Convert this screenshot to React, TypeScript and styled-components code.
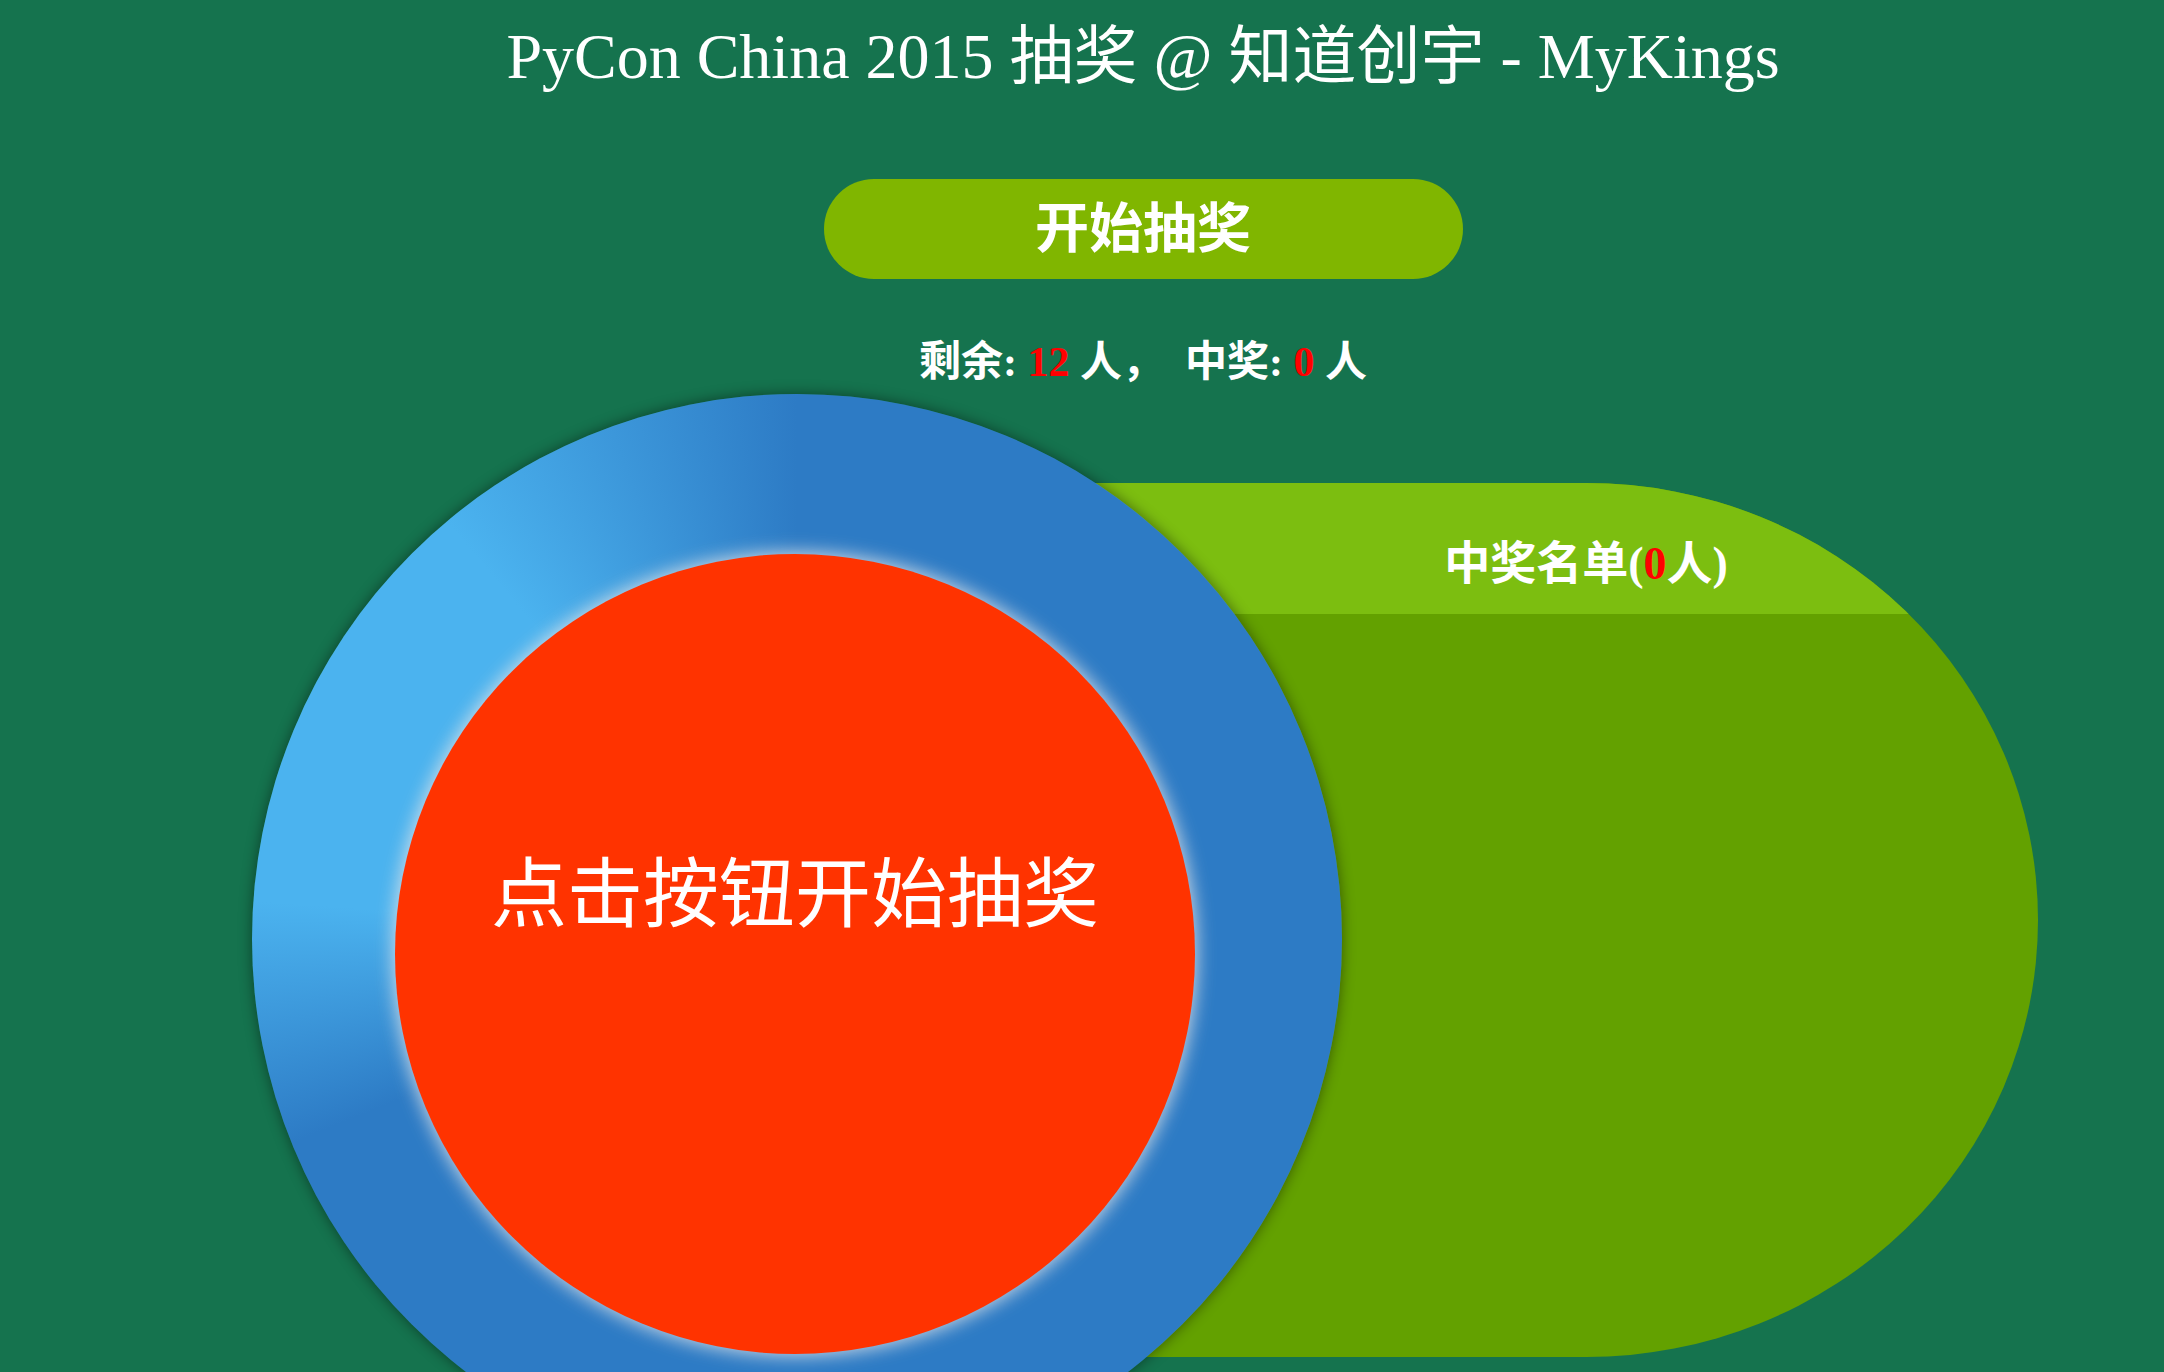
import React from 'react'
import styled, { createGlobalStyle } from 'styled-components'

const GlobalStyle = createGlobalStyle`
  html, body {
    margin: 0;
    padding: 0;
    background: #15734e;
    overflow: hidden;
  }

  body {
    font-family: 'Liberation Serif', 'Noto Sans CJK SC', serif;
    color: #fff;
  }
`

const Page = styled.main`
  display: flex;
  flex-direction: column;
  align-items: center;
  width: 2164px;
  height: 1372px;
  padding-left: 122px;
  box-sizing: border-box;
  overflow: hidden;

  & > * {
    flex: none;
  }
`

const Title = styled.h1`
  margin: 20px 0 0;
  font-size: 64px;
  line-height: 74px;
  font-weight: normal;
  white-space: nowrap;
`

const StartButton = styled.button`
  margin-top: 85px;
  width: 639px;
  height: 100px;
  border: none;
  border-radius: 50px;
  background: #80b600;
  color: #fff;
  font-family: 'Noto Sans CJK SC', sans-serif;
  font-size: 54px;
  font-weight: bold;
  line-height: 1;
  padding: 0 0 8px;
  cursor: pointer;
`

const Stats = styled.p`
  margin: 58px 0 0;
  font-size: 42px;
  line-height: 50px;
  font-weight: bold;
  white-space: pre;
`

const Count = styled.span`
  color: #ff0000;
`

const Board = styled.section`
  align-self: stretch;
  display: flex;
  align-items: flex-start;
  margin-top: 7px;
  padding-left: 130px;
`

const Ring = styled.div`
  position: relative;
  z-index: 2;
  flex: none;
  width: 1090px;
  height: 1090px;
  border-radius: 50%;
  box-sizing: border-box;
  padding: 160px 0 0 143px;
  background: conic-gradient(
    #2d7bc5 0deg,
    #2d7bc5 248deg,
    #4bb3ef 274deg,
    #4bb3ef 320deg,
    #2d7bc5 360deg
  );
  box-shadow: 0 0 14px rgba(0, 0, 0, 0.45);
`

const Ball = styled.div`
  display: flex;
  justify-content: center;
  width: 800px;
  height: 800px;
  border-radius: 50%;
  background: #ff3300;
  box-shadow: 0 0 18px 2px rgba(225, 228, 232, 0.85);
  box-sizing: border-box;
  padding-top: 289px;
  font-family: 'Noto Sans CJK SC', sans-serif;
  font-size: 76px;
  line-height: 90px;
  white-space: nowrap;
  cursor: pointer;
`

const Winners = styled.aside`
  position: relative;
  z-index: 1;
  flex: none;
  display: flex;
  flex-direction: column;
  width: 988px;
  height: 874px;
  margin: 89px 0 0 -292px;
  border-radius: 0 452px 452px 0 / 0 437px 437px 0;
  background: #63a100;
  overflow: hidden;
`

const WinnersHeader = styled.header`
  display: flex;
  align-items: center;
  justify-content: center;
  height: 131px;
  box-sizing: border-box;
  padding: 30px 0 0 84px;
  background: #7cbe10;
  font-size: 46px;
  line-height: 56px;
  font-weight: bold;
  white-space: nowrap;
`

const WinnerList = styled.ul`
  flex: 1;
  margin: 0;
  padding: 0;
  list-style: none;
`

export default function App() {
  const remaining = 12
  const winners: string[] = []

  return (
    <>
      <GlobalStyle />
      <Page>
        <Title>PyCon China 2015 抽奖 @ 知道创宇 - MyKings</Title>
        <StartButton>开始抽奖</StartButton>
        <Stats>
          剩余: <Count>{remaining}</Count> 人，  中奖: <Count>{winners.length}</Count> 人
        </Stats>
        <Board>
          <Ring>
            <Ball>点击按钮开始抽奖</Ball>
          </Ring>
          <Winners>
            <WinnersHeader>
              中奖名单(<Count>{winners.length}</Count>人)
            </WinnersHeader>
            <WinnerList>
              {winners.map((name) => (
                <li key={name}>{name}</li>
              ))}
            </WinnerList>
          </Winners>
        </Board>
      </Page>
    </>
  )
}
